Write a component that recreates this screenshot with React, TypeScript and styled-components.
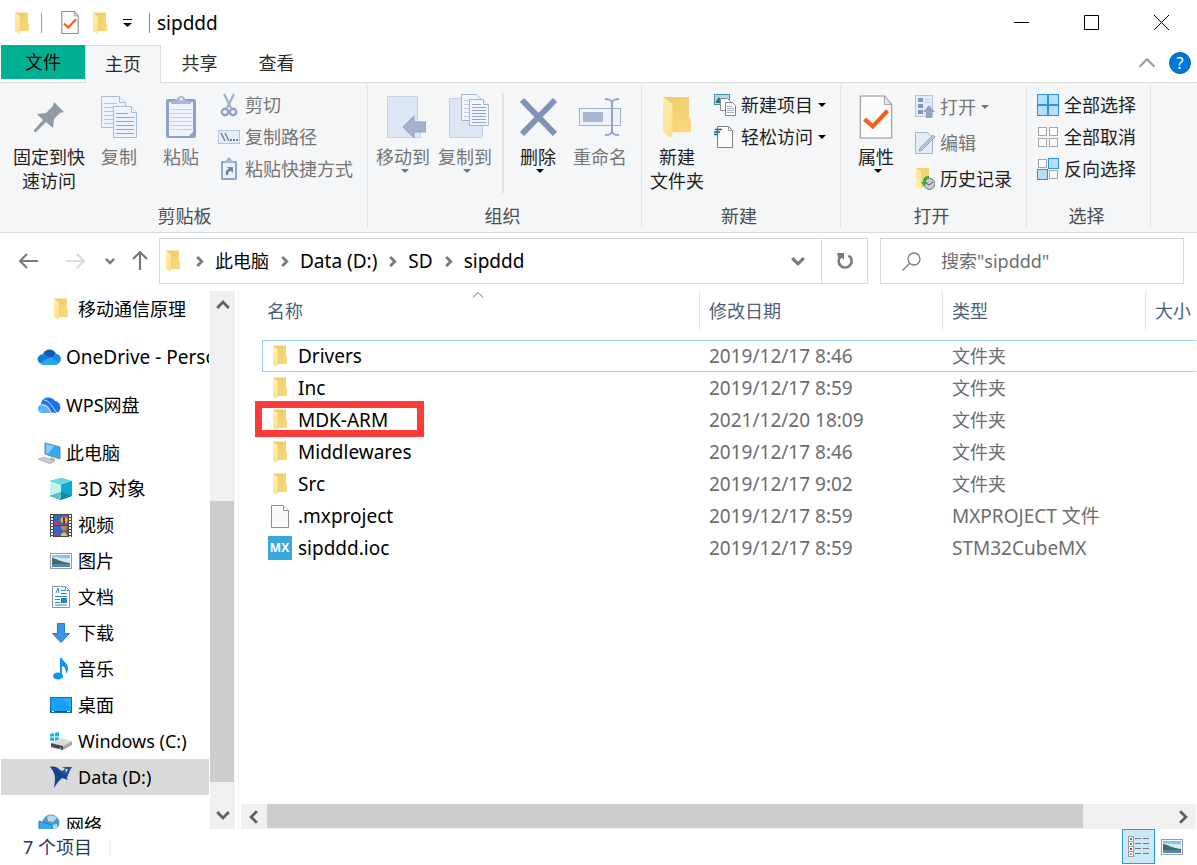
import React from "react";
import styled, { createGlobalStyle, css } from "styled-components";

const GlobalStyle = createGlobalStyle`
  *, *::before, *::after { box-sizing: border-box; }
  html, body { margin: 0; background: #fff; }
  body, button, input, table {
    font-family: "Noto Sans", "Noto Sans CJK SC", sans-serif;
    font-size: 18px;
    line-height: 24px;
    color: #000;
  }
  button { border: 0; padding: 0; margin: 0; background: none; }
  a { color: inherit; text-decoration: none; }
  svg { display: block; flex: none; }
`;

const line = "#dadbdc";

const Window = styled.div`
  height: 100vh;
  min-height: 480px;
  display: flex;
  flex-direction: column;
  overflow: hidden;
  background: #fff;
`;

/* Title bar */
const TitleBar = styled.header`
  flex: none;
  height: 45px;
  display: flex;
  align-items: center;
  padding: 0 1px 0 15px;
`;
const QuickAccess = styled.div`
  display: flex;
  align-items: center;
  gap: 12px;
`;
const QuickButtons = styled.div`
  display: flex;
  align-items: center;
  gap: 14px;
  padding: 0 2px 0 7px;
`;
const QuickButton = styled.button`
  display: flex;
`;
const TitleRule = styled.span<{ $dark?: boolean }>`
  width: 1px;
  height: 20px;
  background: ${(p) => (p.$dark ? "#8a8a8a" : "#9b9b9b")};
`;
const Title = styled.h1`
  flex: 1;
  margin: 0 0 0 7px;
  font-size: 19px;
  line-height: 24px;
  font-weight: 400;
`;
const CaptionButton = styled.button`
  width: 70px;
  height: 45px;
  display: flex;
  align-items: center;
  justify-content: center;
`;

/* Tabs */
const TabBar = styled.nav`
  flex: none;
  height: 38px;
  display: flex;
  align-items: stretch;
  padding-left: 1px;
  border-bottom: 1px solid ${line};
`;
const Tab = styled.button<{ $kind?: "file" | "active" }>`
  width: 77px;
  padding-bottom: 2px;
  ${(p) =>
    p.$kind === "file" &&
    css`
      width: 84px;
      height: 34px;
      padding-bottom: 0;
      background: #00b092;
    `}
  ${(p) =>
    p.$kind === "active" &&
    css`
      width: 76px;
      height: 38px;
      background: #f5f6f7;
      border: 1px solid ${line};
      border-bottom: 0;
    `}
  color: ${(p) => (p.$kind === "file" ? "#000" : "#2b2b2b")};
`;
const TabTools = styled.div`
  margin-left: auto;
  display: flex;
  align-items: center;
  gap: 13px;
  padding: 0 6px 2px 0;
`;
const HelpButton = styled.button`
  width: 22px;
  height: 22px;
  border-radius: 50%;
  background: #0078d7;
  border: 1px solid #0062b5;
  color: #fff;
  font-size: 16px;
  line-height: 20px;
`;

/* Ribbon */
const Ribbon = styled.section`
  flex: none;
  height: 150px;
  display: flex;
  padding: 3px 0 4px;
  background: #f5f6f7;
  border-bottom: 1px solid ${line};
`;
const Group = styled.div<{ $width: number; $pad?: number }>`
  flex: none;
  width: ${(p) => p.$width}px;
  display: flex;
  flex-direction: column;
  justify-content: space-between;
  padding-left: ${(p) => p.$pad ?? 4}px;
  border-right: 1px solid #e2e3e4;
`;
const GroupBody = styled.div`
  display: flex;
  align-items: flex-start;
`;
const GroupLabel = styled.div`
  margin-left: -4px;
  padding-right: 4px;
  text-align: center;
  color: #4c4c4c;
`;
const LargeButton = styled.button<{ $off?: boolean; $wide?: boolean }>`
  width: ${(p) => (p.$wide ? 78 : 62)}px;
  padding-top: 9px;
  display: flex;
  flex-direction: column;
  align-items: center;
  white-space: pre-line;
  text-align: center;
  color: ${(p) => (p.$off ? "#757575" : "#1e1e1e")};
`;
const LargeIcon = styled.span`
  height: 44px;
  margin-bottom: 6px;
  display: flex;
  align-items: center;
`;
const LargeCaret = styled.span`
  padding-left: 4px;
`;
const ButtonRule = styled.span`
  width: 2px;
  height: 100px;
  margin: 7px 3px 0 6px;
  background: #e0e1e3;
`;
const SmallColumn = styled.div<{ $loose?: boolean }>`
  display: flex;
  flex-direction: column;
  align-items: flex-start;
  gap: ${(p) => (p.$loose ? 12 : 8)}px;
  padding: ${(p) => (p.$loose ? 9 : 7)}px 0 0 6px;
`;
const SmallButton = styled.button<{ $off?: boolean }>`
  height: 24px;
  display: flex;
  align-items: center;
  gap: 5px;
  white-space: nowrap;
  color: ${(p) => (p.$off ? "#757575" : "#1e1e1e")};
`;

/* Address row */
const AddressRow = styled.div`
  flex: none;
  display: flex;
  align-items: center;
  padding: 5px 13px 7px 19px;
`;
const History = styled.div`
  flex: none;
  width: 140px;
  display: flex;
  align-items: center;
`;
const HistoryButton = styled.button<{ $gap: number }>`
  margin-right: ${(p) => p.$gap}px;
`;
const AddressBox = styled.div`
  flex: 1;
  min-width: 0;
  height: 46px;
  display: flex;
  align-items: center;
  border: 1px solid #d9d9d9;
  padding-left: 6px;
`;
const Crumbs = styled.div`
  flex: 1;
  display: flex;
  align-items: center;
  gap: 10px;
  white-space: nowrap;
  overflow: hidden;
`;
const RootCrumb = styled.button`
  display: flex;
  align-items: center;
  gap: 14px;
`;
const Crumb = styled.a<{ $latin?: boolean }>`
  font-size: ${(p) => (p.$latin ? 19 : 18)}px;
`;
const BoxButton = styled.button<{ $rule?: boolean }>`
  width: 46px;
  height: 44px;
  display: flex;
  align-items: center;
  justify-content: center;
  border-left: ${(p) => (p.$rule ? "1px solid #d9d9d9" : "0")};
`;
const SearchBox = styled.label`
  flex: 0 1 304px;
  min-width: 0;
  height: 46px;
  margin-left: 12px;
  display: flex;
  align-items: center;
  gap: 20px;
  padding-left: 21px;
  border: 1px solid #d9d9d9;
`;
const SearchInput = styled.input`
  flex: 1;
  min-width: 0;
  padding: 0;
  border: 0;
  outline: 0;
  background: none;
  &::placeholder { color: #6d6d6d; opacity: 1; }
`;

/* Body */
const Body = styled.div`
  flex: 1;
  min-height: 0;
  display: flex;
`;
const Tree = styled.nav`
  flex: none;
  width: 210px;
  padding: 0 1px;
  overflow: hidden;
`;
const TreeLink = styled.a<{ $level: number; $latin?: boolean; $active?: boolean }>`
  height: 36px;
  padding-left: ${(p) => (p.$level ? 48 : 36)}px;
  display: flex;
  align-items: center;
  gap: 5px;
  white-space: nowrap;
  overflow: hidden;
  font-size: ${(p) => (p.$latin ? 19 : 18)}px;
  background: ${(p) => (p.$active ? "#d9d9d9" : "none")};
`;
const TreeSection = styled.div`
  margin-bottom: 12px;
`;
const TreeIcon = styled.span`
  flex: none;
  width: 24px;
  display: flex;
  justify-content: center;
`;
const VScroll = styled.div`
  flex: none;
  width: 25px;
  display: flex;
  flex-direction: column;
  background: #f0f0f0;
`;
const HScroll = styled.div`
  flex: none;
  height: 25px;
  margin: 0 1px 0 2px;
  display: flex;
  background: #f0f0f0;
`;
const ScrollButton = styled.button<{ $side?: boolean }>`
  flex: none;
  width: ${(p) => (p.$side ? 26 : 25)}px;
  height: ${(p) => (p.$side ? 25 : 28)}px;
  display: flex;
  align-items: center;
  justify-content: center;
`;
const TrackPart = styled.div<{ $grow: number; $thumb?: boolean }>`
  flex: ${(p) => p.$grow} 1 0;
  margin: 0 1px 1px 0;
  background: ${(p) => (p.$thumb ? "#cdcdcd" : "transparent")};
`;
const Pane = styled.main`
  flex: 1;
  min-width: 0;
  margin-left: 3px;
  border-left: 1px solid #f0f0f0;
  display: flex;
  flex-direction: column;
`;
const PaneScroll = styled.div`
  flex: 1;
  min-height: 0;
  overflow: hidden;
  padding: 0 1px 0 23px;
`;
const FileTable = styled.table`
  width: 100%;
  table-layout: fixed;
  border-collapse: separate;
  border-spacing: 0;
`;
const Col = styled.col<{ $width?: number }>`
  width: ${(p) => (p.$width ? `${p.$width}px` : "auto")};
`;
const HeadCell = styled.th<{ $first?: boolean }>`
  position: relative;
  height: 40px;
  padding: 0 0 0 ${(p) => (p.$first ? 5 : 9)}px;
  border-left: ${(p) => (p.$first ? "0" : "1px solid #e5e5e5")};
  text-align: left;
  font-weight: 400;
  white-space: nowrap;
  color: #4c607a;
`;
const SortMark = styled.span`
  position: absolute;
  top: -2px;
  left: 0;
  right: 5px;
  display: flex;
  justify-content: center;
`;
const Gap = styled.td`
  height: 9px;
  padding: 0;
`;
const Row = styled.tr<{ $focus?: boolean }>`
  & > td {
    border: 0 solid #99d1ff;
    border-width: ${(p) => (p.$focus ? "1px 0" : "0")};
  }
  & > td:first-child { border-left-width: ${(p) => (p.$focus ? 1 : 0)}px; }
`;
const Cell = styled.td<{ $latin?: boolean }>`
  height: 32px;
  padding: 0 0 0 10px;
  white-space: nowrap;
  color: #6d6d6d;
  font-size: ${(p) => (p.$latin ? 19 : 18)}px;
`;
const NameCell = styled.td`
  height: 32px;
  padding: 0;
  font-size: 19px;
`;
const Name = styled.div<{ $focus?: boolean }>`
  position: relative;
  display: flex;
  align-items: center;
  gap: 6px;
  padding-left: ${(p) => (p.$focus ? 4 : 5)}px;
`;
const FileIcon = styled.span`
  width: 25px;
  display: flex;
  justify-content: center;
`;
const Highlight = styled.span`
  position: absolute;
  left: -7px;
  top: -7px;
  width: 169px;
  height: 36px;
  border: 7px solid #fc3a3a;
`;
const MxBadge = styled.span`
  width: 24px;
  height: 24px;
  background: #39a9dc;
  color: #fff;
  font: 700 12px/24px "Open Sans", sans-serif;
  text-align: center;
`;

/* Status bar */
const StatusBar = styled.footer`
  flex: none;
  height: 36px;
  display: flex;
  align-items: center;
  padding-left: 23px;
  color: #1e395b;
`;
const StatusRule = styled.span`
  width: 2px;
  height: 17px;
  margin-left: 17px;
  background: #f0f0f0;
`;
const Views = styled.div`
  margin-left: auto;
  padding-right: 9px;
  display: flex;
  align-self: flex-start;
`;
const ViewButton = styled.button<{ $on?: boolean }>`
  width: 33px;
  height: 35px;
  display: flex;
  align-items: center;
  justify-content: center;
  background: ${(p) => (p.$on ? "#cce8f6" : "none")};
  border: 1px solid ${(p) => (p.$on ? "#26a0da" : "transparent")};
`;

/* Icons */
const Folder = ({ w = 14, h = 22 }: { w?: number; h?: number }) => (
  <svg width={w} height={h} viewBox="0 0 14 22" preserveAspectRatio="none" aria-hidden="true">
    <defs>
      <linearGradient id="fb" x1="0" y1="0" x2="1" y2="1">
        <stop offset="0" stopColor="#ecc95f" />
        <stop offset="1" stopColor="#fadb83" />
      </linearGradient>
      <linearGradient id="ff" x1="0" y1="0" x2="0" y2="1">
        <stop offset="0" stopColor="#ffeeb0" />
        <stop offset="1" stopColor="#ffe18b" />
      </linearGradient>
    </defs>
    <path d="M0 0.5h13v10.5l1 1.5v6.5H4z" fill="url(#fb)" />
    <path d="M0 0.5l4.7 3.5v17.5l-1 .3L0 19z" fill="url(#ff)" />
  </svg>
);

const CheckPage = ({ w, h, sw }: { w: number; h: number; sw: number }) => (
  <svg width={w} height={h} viewBox="0 0 32 42" aria-hidden="true">
    <path d="M1 1h23l7 8v32H1z" fill="#fcfcfc" stroke="#8f8f8f" strokeWidth={sw} />
    <path d="M24 1v8h7z" fill="#e8e8e8" stroke="#9a9a9a" strokeWidth={sw * 0.8} />
    <path d="M5 23l8 7 14-15" fill="none" stroke="#f4611c" strokeWidth="4" />
  </svg>
);

const Pin = () => (
  <svg width="32" height="42" viewBox="0 0 32 42" aria-hidden="true">
    <path d="M21 6l10 10-4 1-6 6-1 9-7-6-10 10-2 0 0-2 9-10-6-6 9-1 7-7z" fill="#8f9aa3" />
  </svg>
);

const Pages = () => (
  <svg width="38" height="44" viewBox="-1 0 38 44" aria-hidden="true">
    <g fill="#edf3fc" stroke="#aab9d4">
      <path d="M.5 1.500h18l6 6v25H.5z" />
      <path d="M18.500 1.500v6h6" />
      <path d="M3 8.500h13M3 12.500h18M3 16.500h18M3 20.500h18M3 24.500h18M3 28.500h18" stroke="#b9c7df" />
      <path d="M12.500 11.500h18l5 6v25h-23z" />
      <path d="M30.500 11.500v6h5" />
      <path d="M15 18.500h12M15 22.500h18M15 26.500h18M15 30.500h18M15 34.500h18M15 38.500h18" stroke="#93a5c6" />
    </g>
  </svg>
);

const Clipboard = () => (
  <svg width="32" height="44" viewBox="0 0 32 44" aria-hidden="true">
    <rect x="1" y="4" width="30" height="39" rx="2" fill="#8fa2c5" />
    <path d="M4 7h24v30l-4 4H4z" fill="#eff4fc" />
    <path d="M5 14.500h22M5 18.500h22M5 22.500h22M5 26.500h22M5 30.500h22M5 34.500h22" stroke="#c5d2e7" />
    <path d="M6 9c0-4 4-3 6-5 0-4 8-4 8 0 2 2 6 1 6 5z" fill="#a9b8d2" />
    <circle cx="16" cy="4" r="1.500" fill="#eef3fb" />
  </svg>
);

const Scissors = () => (
  <svg width="22" height="24" viewBox="0 0 22 24" fill="none" aria-hidden="true">
    <path d="M6 1l7 14M16 1L9 15" stroke="#9fb0cf" strokeWidth="2.200" />
    <circle cx="7" cy="19" r="3.200" stroke="#8fa2c5" strokeWidth="2.400" />
    <circle cx="15" cy="19" r="3.200" stroke="#8fa2c5" strokeWidth="2.400" />
  </svg>
);

const PathIcon = () => (
  <svg width="22" height="14" viewBox="0 0 22 14" aria-hidden="true">
    <rect x=".5" y=".5" width="21" height="13" fill="#e6eefa" stroke="#b5c4dd" />
    <path d="M3 3l4 8M7 3l4 8" stroke="#6e82a8" strokeWidth="1.500" />
    <path d="M12 9h2v2h-2zM15 9h2v2h-2zM18 9h2v2h-2z" fill="#6e82a8" />
  </svg>
);

const ShortcutClip = () => (
  <svg width="22" height="24" viewBox="0 0 22 24" aria-hidden="true">
    <rect x="3" y="4" width="16" height="19" rx="1" fill="#93a5c6" />
    <path d="M5 6h12v15H5z" fill="#eef3fb" />
    <path d="M6 6c0-3 3-2 3-4 1-2 3-2 4 0 0 2 3 1 3 4z" fill="#a9b8d2" />
    <path d="M8 18c-1-4 1-6 3-6l-2-2h6v6l-2-2c-2 0-3 2-3 4z" fill="#6f86b2" />
  </svg>
);

const MoveTo = () => (
  <svg width="46" height="44" viewBox="-6 0 46 44" aria-hidden="true">
    <path d="M1.500 1.500h30v25h3v16h-33z" fill="#dce6f4" stroke="#c3d2e8" />
    <path d="M17 32l11-11v6h12v10H28v6z" fill="#a3b3cf" stroke="#8fa2c2" />
  </svg>
);

const CopyTo = () => (
  <svg width="50" height="46" viewBox="-8 0 50 46" aria-hidden="true">
    <path d="M1.500 4.500h31v25h2v14h-33z" fill="#dce6f4" stroke="#c3d2e8" />
    <g fill="#f1f5fc" stroke="#a9b8d2">
      <path d="M13.500 .5h15l5 5v21h-20z" />
      <path d="M16 6.500h9M16 10.500h14M16 14.500h14M16 18.500h14M16 22.500h14" stroke="#c0cde2" />
      <path d="M21.500 5.500h14l5 5v21h-19z" />
      <path d="M35.500 5.500v5h5" />
      <path d="M24 10.500h9M24 13.500h14M24 16.500h14M24 19.500h14M24 22.500h14M24 25.500h14M24 28.500h14" stroke="#93a5c6" />
    </g>
  </svg>
);

const DeleteX = () => (
  <svg width="40" height="42" viewBox="-1 0 40 42" aria-hidden="true">
    <path d="M3 4l33 34M36 4L3 38" stroke="#8093b6" strokeWidth="6" />
  </svg>
);

const Rename = () => (
  <svg width="44" height="42" viewBox="-1 0 44 42" fill="none" aria-hidden="true">
    <rect x=".5" y="12.500" width="41" height="17" fill="#edf3fc" stroke="#a3b3cf" />
    <rect x="4" y="16" width="20" height="10" fill="#a9b8d2" />
    <path d="M26 3c5 0 7 1 7 5v26c0 4-2 5-7 5M40 3c-5 0-7 1-7 5v26c0 4 2 5 7 5" stroke="#93a5c6" strokeWidth="2" />
  </svg>
);

const NewItem = () => (
  <svg width="22" height="22" viewBox="0 0 22 22" aria-hidden="true">
    <rect x=".5" y=".5" width="15" height="10" fill="#a9dcf5" stroke="#4f8fa8" />
    <path d="M2 7l3-4 3 4 3-2 3 4H2z" fill="#33796f" />
    <path d="M6.500 4.500h7l3 3v9h-10z" fill="#fff" stroke="#8d8d8d" />
    <path d="M11.500 8.500h7l3 3v10h-10z" fill="#fff" stroke="#7b8794" />
    <path d="M13 12.500h5M13 14.500h7M13 16.500h7M13 18.500h7" stroke="#9fb2c8" />
  </svg>
);

const EasyAccess = () => (
  <svg width="22" height="22" viewBox="0 0 22 22" aria-hidden="true">
    <path d="M3.500 .5h11l4 4v17h-15z" fill="#fbfbfb" stroke="#7f7f7f" />
    <path d="M14.500 .5v4h4" fill="none" stroke="#9a9a9a" />
    <path d="M1 3.500h7M0 6h6M0 8.500h4" stroke="#1664a8" strokeWidth="1.500" />
  </svg>
);

const OpenIcon = () => (
  <svg width="22" height="24" viewBox="0 0 22 24" aria-hidden="true">
    <rect x="2.500" y=".5" width="17" height="21" fill="#e4ecf8" stroke="#b5c4dd" />
    <path d="M5 3h5v4H5zM5 9h5v4H5zM5 15h5v4H5z" fill="#8396bc" />
    <path d="M12 4.500h5M12 7.500h5" stroke="#c0cde2" />
    <path d="M16 10l6 7h-3v6h-6v-6h-3z" fill="#93a5c6" />
  </svg>
);

const EditIcon = () => (
  <svg width="22" height="24" viewBox="0 0 22 24" aria-hidden="true">
    <path d="M2.500 1.500h12l5 5v16h-17z" fill="#e4ecf8" stroke="#a9b8d2" />
    <path d="M20 4l2 2L9 19l-3 1 1-3z" fill="#b7c6de" stroke="#93a5c6" />
  </svg>
);

const HistoryIcon = () => (
  <svg width="22" height="24" viewBox="0 0 22 24" aria-hidden="true">
    <path d="M3 1h13v19H7z" fill="#f3d273" />
    <path d="M3 1l5 3v18.500L3 20z" fill="#ffe9a3" />
    <circle cx="16.500" cy="17" r="5.500" fill="#c9ccce" stroke="#73787b" />
    <path d="M13 16l3 2 4-3" fill="none" stroke="#4e5355" />
    <path d="M16 9c-4 0-6 2-6 6H8l3 4 4-4h-2c0-3 1-4 3-4z" fill="#2fae43" />
  </svg>
);

const Tiles = ({ on }: { on: boolean[] }) => (
  <svg width="22" height="22" viewBox="0 0 22 22" aria-hidden="true">
    {on.map((v, i) => {
      const x = (i % 2) * 11;
      const y = Math.floor(i / 2) * 11;
      return v ? (
        <rect key={i} x={x + 0.5} y={y + 0.5} width="10" height="10" fill="#b4defa" stroke="#2d93e0" />
      ) : (
        <rect key={i} x={x + 1.5} y={y + 1.5} width="8" height="8" fill="#fafafa" stroke="#a6a6a6" />
      );
    })}
  </svg>
);

const Caret = ({ color = "#000" }: { color?: string }) => (
  <svg width="8" height="4" viewBox="0 0 8 4" aria-hidden="true">
    <path d="M0 0h8L4 4z" fill={color} />
  </svg>
);

type Dir = "up" | "down" | "left" | "right";
const turns: Record<Dir, number> = { down: 0, left: 90, up: 180, right: 270 };
const Chevron = ({ dir, size = 12, color = "#606060", sw = 2.4 }: { dir: Dir; size?: number; color?: string; sw?: number }) => (
  <svg width={size} height={size} viewBox="0 0 12 12" aria-hidden="true">
    <path d="M1 3.500l5 5 5-5" transform={`rotate(${turns[dir]} 6 6)`} fill="none" stroke={color} strokeWidth={sw} />
  </svg>
);

const Arrow = ({ dir, color }: { dir: Dir; color: string }) => (
  <svg width="20" height="20" viewBox="0 0 20 20" aria-hidden="true">
    <path d="M10 1v18M3 12l7 7 7-7" transform={`rotate(${turns[dir]} 10 10)`} fill="none" stroke={color} strokeWidth="2.200" />
  </svg>
);

const OneDrive = () => (
  <svg width="24" height="16" viewBox="0 0 24 16" aria-hidden="true">
    <path d="M6 5c2-6 11-6 13 0l-5 5z" fill="#0a5fb4" />
    <path d="M5 15c-6-1-6-9 1-10l11 5-5 5z" fill="#127bd3" />
    <path d="M14 9l5-4c6 0 7 9 0 10z" fill="#1690dd" />
    <path d="M3 14l11-6 8 6c-1 1-2 2-4 2H6c-1 0-2-1-3-2z" fill="#28a8ea" />
  </svg>
);
const Wps = () => (
  <svg width="24" height="17" viewBox="0 0 24 17" aria-hidden="true">
    <path d="M4 7c1-8 11-8 14-3 7 1 7 11 1 12l-6-1z" fill="#1a72f2" />
    <path d="M5 16c-5 0-6-8 0-9 4-1 8 3 10 9z" fill="#5bb2ff" />
    <path d="M7 3c5 0 9 8 13 13M5 8c4 0 7 3 9 8" fill="none" stroke="#d7ecff" strokeWidth="1" />
  </svg>
);
const Pc = () => (
  <svg width="24" height="22" viewBox="0 0 24 22" aria-hidden="true">
    <path d="M8 1l15 4v12L8 12z" fill="#35a7ee" stroke="#6c8ba1" />
    <path d="M9 2l8 2-6 8-2-1z" fill="#7fcaf8" />
    <path d="M14 15l4 2v2l-6-1z" fill="#b0b8be" />
    <path d="M1 17l6-2 11 4-5 3z" fill="#c5cbd0" stroke="#9fa7ad" strokeWidth=".6" />
  </svg>
);
const Cube = () => (
  <svg width="22" height="22" viewBox="0 0 22 22" aria-hidden="true">
    <path d="M11 0l11 3v15l-11 4-11-4V3z" fill="#19a9c9" />
    <path d="M11 0l11 3-11 4L0 3z" fill="#6ed6de" />
    <path d="M0 3l11 4v8L0 18z" fill="#c5f2ef" />
    <path d="M11 7l11-4v15l-11-4z" fill="#0faad6" />
    <path d="M0 18l11-4 11 4-11 4z" fill="#168aa5" />
    <path d="M0 18l11-4v8z" fill="#51c6cf" />
  </svg>
);
const Film = () => (
  <svg width="22" height="23" viewBox="0 0 22 23" aria-hidden="true">
    <path d="M0 0h22v23H0z" fill="#4a4a4a" />
    <path d="M2 1v22M20 1v22" stroke="#f4f4f4" strokeWidth="2" strokeDasharray="2 1" />
    <path d="M4 1h14v10H4zM4 12h14v10H4z" fill="#2f68c4" />
    <circle cx="14" cy="6" r="3.500" fill="#f2b01e" />
    <path d="M13 3h2v7h-2z" fill="#8c2a1a" />
    <path d="M4 9l4-2 2 3-2 1H4z" fill="#d8344a" />
    <path d="M11 12h6c0 4-2 4-3 5-1-1-3-1-3-5z" fill="#e8772e" />
    <path d="M11 22c0-5 6-5 6 0z" fill="#f4c52b" />
    <path d="M5 19h4v2H5z" fill="#d8344a" />
  </svg>
);
const Picture = () => (
  <svg width="22" height="16" viewBox="0 0 22 16" aria-hidden="true">
    <rect x=".5" y=".5" width="21" height="15" fill="#fff" stroke="#9b9b9b" />
    <path d="M2 2h18v12H2z" fill="#8dc0f2" />
    <path d="M2 5c5-2 8 1 18 0v5H2z" fill="#d7ebf8" />
    <path d="M2 5c4 0 8 4 18 5v1H2z" fill="#3f6f5e" />
    <path d="M2 11h18v3H2z" fill="#4f86b4" />
  </svg>
);
const Doc = () => (
  <svg width="18" height="22" viewBox="0 0 18 22" aria-hidden="true">
    <path d="M.5 .5h13l4 4v17H.5z" fill="#fff" stroke="#8f9499" />
    <path d="M13.500 .5v4h4" fill="none" stroke="#8f9499" />
    <path d="M4 7l2-5 1 5M9 4.500h4M9 7.500h6M3 10.500h12M3 13.500h5M3 16.500h5M3 19h12" fill="none" stroke="#1e8bd0" />
    <path d="M9 12h6v5H9z" fill="#3b78a4" />
  </svg>
);
const Download = () => (
  <svg width="18" height="20" viewBox="0 0 18 20" aria-hidden="true">
    <path d="M5.500 .5h7v10h5L9 19.500.5 10.500h5z" fill="#3a97e8" stroke="#2379c2" />
  </svg>
);
const Music = () => (
  <svg width="18" height="22" viewBox="0 0 18 22" aria-hidden="true">
    <ellipse cx="6" cy="18" rx="5" ry="3.600" fill="#0f97f2" />
    <path d="M8 0h2c1 4 7 5 6 12l-2 4c0-5-1-7-4-8v10H8z" fill="#0f97f2" />
  </svg>
);
const Desktop = () => (
  <svg width="22" height="16" viewBox="0 0 22 16" aria-hidden="true">
    <rect x=".5" y=".5" width="21" height="15" fill="#18a0fb" stroke="#0f6fb8" />
    <path d="M12 1h9v10z" fill="#43b3fd" opacity=".5" />
    <path d="M1 14.500h20" stroke="#0b5590" />
    <path d="M2 14.500h2M17 14.500h3" stroke="#fff" />
  </svg>
);
const Drive = () => (
  <svg width="22" height="18" viewBox="0 0 22 18" aria-hidden="true">
    <path d="M0 2l4-1v3.500H0zM5 1l4-1v4.500H5zM0 5.500h4V9L0 8.500zM5 5.500h4v4L5 9z" fill="#12b5ea" />
    <path d="M1 11l10-5 11 3-9 5z" fill="#dcdcdc" />
    <path d="M1 11l12 3v4L1 15z" fill="#4b4b4b" />
    <path d="M13 14l9-5v4l-9 5z" fill="#a9a9a9" />
    <path d="M9 16l2 .500" stroke="#5bdc5b" />
  </svg>
);
const Eagle = () => (
  <svg width="22" height="22" viewBox="0 0 22 22" aria-hidden="true">
    <path d="M0 1c4-1 7 0 9 2l7 7 2 4-6-2-4 4-4 6 1-9c0-5-2-9-5-12z" fill="#14458f" />
    <path d="M11 2l4-1h7l-2 3-2 5-1 3-7-8 3 1 2-3z" fill="#1c4f9f" />
    <path d="M15 3l3 0-2 4z" fill="#d9d9d9" />
  </svg>
);
const Network = () => (
  <svg width="24" height="22" viewBox="0 0 24 22" aria-hidden="true">
    <circle cx="14" cy="9" r="8.500" fill="#4f9bc6" />
    <path d="M10 3c3-3 8-1 10 1l-4 4-5-1zM15 11l5-1 1 4-4 3z" fill="#b9d9e6" />
    <path d="M2 7l13 4v11H2z" fill="#38a7f0" stroke="#2d7fb8" />
  </svg>
);
const BlankPage = () => (
  <svg width="18" height="23" viewBox="0 0 18 23" aria-hidden="true">
    <path d="M.5 .5h12l5 5v17H.5z" fill="#f9f9f9" stroke="#8e8e8e" />
    <path d="M12.500 .5v5h5" fill="#fff" stroke="#8e8e8e" />
  </svg>
);
const DetailsView = () => (
  <svg width="22" height="22" viewBox="0 0 22 22" aria-hidden="true">
    {[0, 5, 10, 15].map((y, i) => (
      <g key={y}>
        <rect x=".5" y={y + 0.5} width="5" height="5" fill="#fff" stroke="#9b9b9b" />
        <rect x="2" y={y + 2} width="2" height="2" fill={["#3a8c8c", "#7b8a35", "#c0392b", "#7f9fd0"][i]} />
        <path d={`M7 ${y + 2.5}h6M15 ${y + 2.5}h6`} stroke="#777" />
      </g>
    ))}
  </svg>
);

/* Pieces */
const Large = ({ icon, text, off, wide, menu }: { icon: React.ReactNode; text: string; off?: boolean; wide?: boolean; menu?: boolean }) => (
  <LargeButton $off={off} $wide={wide}>
    <LargeIcon>{icon}</LargeIcon>
    <span>{text}</span>
    {menu && <LargeCaret><Caret color={off ? "#757575" : "#000"} /></LargeCaret>}
  </LargeButton>
);
const Small = ({ icon, text, off, menu }: { icon: React.ReactNode; text: string; off?: boolean; menu?: boolean }) => (
  <SmallButton $off={off}>
    {icon}
    <span>{text}</span>
    {menu && <Caret color={off ? "#757575" : "#000"} />}
  </SmallButton>
);

const devices = [
  { text: "3D 对象", icon: <Cube />, latin: true },
  { text: "视频", icon: <Film /> },
  { text: "图片", icon: <Picture /> },
  { text: "文档", icon: <Doc /> },
  { text: "下载", icon: <Download /> },
  { text: "音乐", icon: <Music /> },
  { text: "桌面", icon: <Desktop /> },
  { text: "Windows (C:)", icon: <Drive /> },
  { text: "Data (D:)", icon: <Eagle />, active: true },
];

const TreeItem = ({ text, icon, level = 0, latin, active }: { text: string; icon: React.ReactNode; level?: number; latin?: boolean; active?: boolean }) => (
  <TreeLink href="#" $level={level} $latin={latin} $active={active}>
    <TreeIcon>{icon}</TreeIcon>
    <span>{text}</span>
  </TreeLink>
);

const files = [
  { name: "Drivers", date: "2019/12/17 8:46", type: "文件夹", focus: true },
  { name: "Inc", date: "2019/12/17 8:59", type: "文件夹" },
  { name: "MDK-ARM", date: "2021/12/20 18:09", type: "文件夹", marked: true },
  { name: "Middlewares", date: "2019/12/17 8:46", type: "文件夹" },
  { name: "Src", date: "2019/12/17 9:02", type: "文件夹" },
  { name: ".mxproject", date: "2019/12/17 8:59", type: "MXPROJECT 文件", latin: true, icon: <BlankPage /> },
  { name: "sipddd.ioc", date: "2019/12/17 8:59", type: "STM32CubeMX", latin: true, icon: <MxBadge>MX</MxBadge> },
];

export default function App() {
  return (
    <Window>
      <GlobalStyle />
      <TitleBar>
        <QuickAccess>
          <Folder />
          <TitleRule />
          <QuickButtons>
            <QuickButton aria-label="属性"><CheckPage w={18} h={23} sw={2} /></QuickButton>
            <QuickButton aria-label="新建文件夹"><Folder /></QuickButton>
            <QuickButton aria-label="自定义快速访问工具栏">
              <svg width="14" height="10" viewBox="0 0 14 10" aria-hidden="true">
                <path d="M2 1h9v1H2zM2 5h9L6.500 9z" />
              </svg>
            </QuickButton>
          </QuickButtons>
          <TitleRule $dark />
        </QuickAccess>
        <Title>sipddd</Title>
        <CaptionButton aria-label="最小化">
          <svg width="15" height="15"><path d="M0 7.500h15" stroke="#000" /></svg>
        </CaptionButton>
        <CaptionButton aria-label="最大化">
          <svg width="15" height="15"><path d="M.5 .5h14v14H.5z" fill="none" stroke="#000" /></svg>
        </CaptionButton>
        <CaptionButton aria-label="关闭">
          <svg width="15" height="15"><path d="M0 0l15 15M15 0L0 15" stroke="#000" /></svg>
        </CaptionButton>
      </TitleBar>

      <TabBar>
        <Tab $kind="file">文件</Tab>
        <Tab $kind="active">主页</Tab>
        <Tab>共享</Tab>
        <Tab>查看</Tab>
        <TabTools>
          <button aria-label="折叠功能区"><Chevron dir="up" size={18} color="#9b9b9b" sw={1.5} /></button>
          <HelpButton aria-label="帮助">?</HelpButton>
        </TabTools>
      </TabBar>

      <Ribbon>
        <Group $width={368} $pad={10}>
          <GroupBody>
            <Large wide icon={<Pin />} text={"固定到快\n速访问"} />
            <Large off icon={<Pages />} text="复制" />
            <Large off icon={<Clipboard />} text="粘贴" />
            <SmallColumn>
              <Small off icon={<Scissors />} text="剪切" />
              <Small off icon={<PathIcon />} text="复制路径" />
              <Small off icon={<ShortcutClip />} text="粘贴快捷方式" />
            </SmallColumn>
          </GroupBody>
          <GroupLabel>剪贴板</GroupLabel>
        </Group>
        <Group $width={274}>
          <GroupBody>
            <Large off menu icon={<MoveTo />} text="移动到" />
            <Large off menu icon={<CopyTo />} text="复制到" />
            <ButtonRule />
            <Large menu icon={<DeleteX />} text="删除" />
            <Large off icon={<Rename />} text="重命名" />
          </GroupBody>
          <GroupLabel>组织</GroupLabel>
        </Group>
        <Group $width={199}>
          <GroupBody>
            <Large icon={<Folder w={28} h={42} />} text={"新建\n文件夹"} />
            <SmallColumn>
              <Small menu icon={<NewItem />} text="新建项目" />
              <Small menu icon={<EasyAccess />} text="轻松访问" />
            </SmallColumn>
          </GroupBody>
          <GroupLabel>新建</GroupLabel>
        </Group>
        <Group $width={186}>
          <GroupBody>
            <Large menu icon={<CheckPage w={34} h={44} sw={1} />} text="属性" />
            <SmallColumn $loose>
              <Small off menu icon={<OpenIcon />} text="打开" />
              <Small off icon={<EditIcon />} text="编辑" />
              <Small icon={<HistoryIcon />} text="历史记录" />
            </SmallColumn>
          </GroupBody>
          <GroupLabel>打开</GroupLabel>
        </Group>
        <Group $width={124}>
          <GroupBody>
            <SmallColumn>
              <Small icon={<Tiles on={[true, true, true, true]} />} text="全部选择" />
              <Small icon={<Tiles on={[false, false, false, false]} />} text="全部取消" />
              <Small icon={<Tiles on={[false, true, true, false]} />} text="反向选择" />
            </SmallColumn>
          </GroupBody>
          <GroupLabel>选择</GroupLabel>
        </Group>
      </Ribbon>

      <AddressRow>
        <History>
          <HistoryButton $gap={26} aria-label="后退"><Arrow dir="left" color="#7a7a7a" /></HistoryButton>
          <HistoryButton $gap={20} aria-label="前进"><Arrow dir="right" color="#dcdcdc" /></HistoryButton>
          <HistoryButton $gap={15} aria-label="最近浏览的位置"><Chevron dir="down" size={10} color="#7a7a7a" sw={3} /></HistoryButton>
          <HistoryButton $gap={0} aria-label="上移"><Arrow dir="up" color="#7a7a7a" /></HistoryButton>
        </History>
        <AddressBox>
          <Crumbs>
            <RootCrumb aria-label="根位置">
              <Folder />
              <Chevron dir="right" size={11} color="#7a7a7a" sw={3} />
            </RootCrumb>
            <Crumb href="#">此电脑</Crumb>
            <Chevron dir="right" size={11} color="#7a7a7a" sw={3} />
            <Crumb href="#" $latin>Data (D:)</Crumb>
            <Chevron dir="right" size={11} color="#7a7a7a" sw={3} />
            <Crumb href="#" $latin>SD</Crumb>
            <Chevron dir="right" size={11} color="#7a7a7a" sw={3} />
            <Crumb href="#" $latin>sipddd</Crumb>
          </Crumbs>
          <BoxButton aria-label="历史位置"><Chevron dir="down" size={14} color="#7a7a7a" sw={2.6} /></BoxButton>
          <BoxButton $rule aria-label="刷新">
            <svg width="18" height="18" viewBox="0 0 18 18" aria-hidden="true">
              <path d="M12.500 3.500a6.500 6.500 0 1 1-8 1" fill="none" stroke="#7a7a7a" strokeWidth="2.600" />
              <path d="M1 1h7v7l-2-2-4-1z" fill="#7a7a7a" />
            </svg>
          </BoxButton>
        </AddressBox>
        <SearchBox>
          <svg width="19" height="19" viewBox="0 0 19 19" fill="none" stroke="#7a7a7a" strokeWidth="1.300" aria-hidden="true">
            <circle cx="12" cy="7" r="6" />
            <path d="M7.500 11.500L.500 18.500" />
          </svg>
          <SearchInput type="text" aria-label="搜索" placeholder={'搜索"sipddd"'} />
        </SearchBox>
      </AddressRow>

      <Body>
        <Tree aria-label="导航窗格">
          <TreeSection><TreeItem level={1} text="移动通信原理" icon={<Folder />} /></TreeSection>
          <TreeSection><TreeItem latin text="OneDrive - Personal" icon={<OneDrive />} /></TreeSection>
          <TreeSection><TreeItem text="WPS网盘" icon={<Wps />} /></TreeSection>
          <TreeSection>
            <TreeItem text="此电脑" icon={<Pc />} />
            {devices.map((d) => (
              <TreeItem key={d.text} level={1} {...d} />
            ))}
          </TreeSection>
          <TreeItem text="网络" icon={<Network />} />
        </Tree>
        <VScroll>
          <ScrollButton aria-label="向上滚动"><Chevron dir="up" size={14} /></ScrollButton>
          <TrackPart $grow={182} />
          <TrackPart $grow={282} $thumb />
          <TrackPart $grow={17} />
          <ScrollButton aria-label="向下滚动"><Chevron dir="down" size={14} /></ScrollButton>
        </VScroll>
        <Pane>
          <PaneScroll>
            <FileTable>
              <colgroup>
                <Col $width={437} />
                <Col $width={243} />
                <Col $width={203} />
                <Col />
              </colgroup>
              <thead>
                <tr>
                  <HeadCell $first>
                    名称
                    <SortMark><Chevron dir="up" size={12} color="#6d6d6d" sw={1} /></SortMark>
                  </HeadCell>
                  <HeadCell>修改日期</HeadCell>
                  <HeadCell>类型</HeadCell>
                  <HeadCell>大小</HeadCell>
                </tr>
              </thead>
              <tbody>
                <tr><Gap colSpan={4} /></tr>
                {files.map((f) => (
                  <Row key={f.name} $focus={f.focus}>
                    <NameCell>
                      <Name $focus={f.focus}>
                        <FileIcon>{f.icon ?? <Folder />}</FileIcon>
                        {f.name}
                        {f.marked && <Highlight />}
                      </Name>
                    </NameCell>
                    <Cell $latin>{f.date}</Cell>
                    <Cell $latin={f.latin}>{f.type}</Cell>
                    <Cell />
                  </Row>
                ))}
              </tbody>
            </FileTable>
          </PaneScroll>
          <HScroll>
            <ScrollButton $side aria-label="向左滚动"><Chevron dir="left" size={14} /></ScrollButton>
            <TrackPart $grow={817} $thumb />
            <TrackPart $grow={85} />
            <ScrollButton $side aria-label="向右滚动"><Chevron dir="right" size={14} /></ScrollButton>
          </HScroll>
        </Pane>
      </Body>

      <StatusBar>
        <span>7 个项目</span>
        <StatusRule />
        <Views>
          <ViewButton $on aria-label="详细信息"><DetailsView /></ViewButton>
          <ViewButton aria-label="大图标"><Picture /></ViewButton>
        </Views>
      </StatusBar>
    </Window>
  );
}
